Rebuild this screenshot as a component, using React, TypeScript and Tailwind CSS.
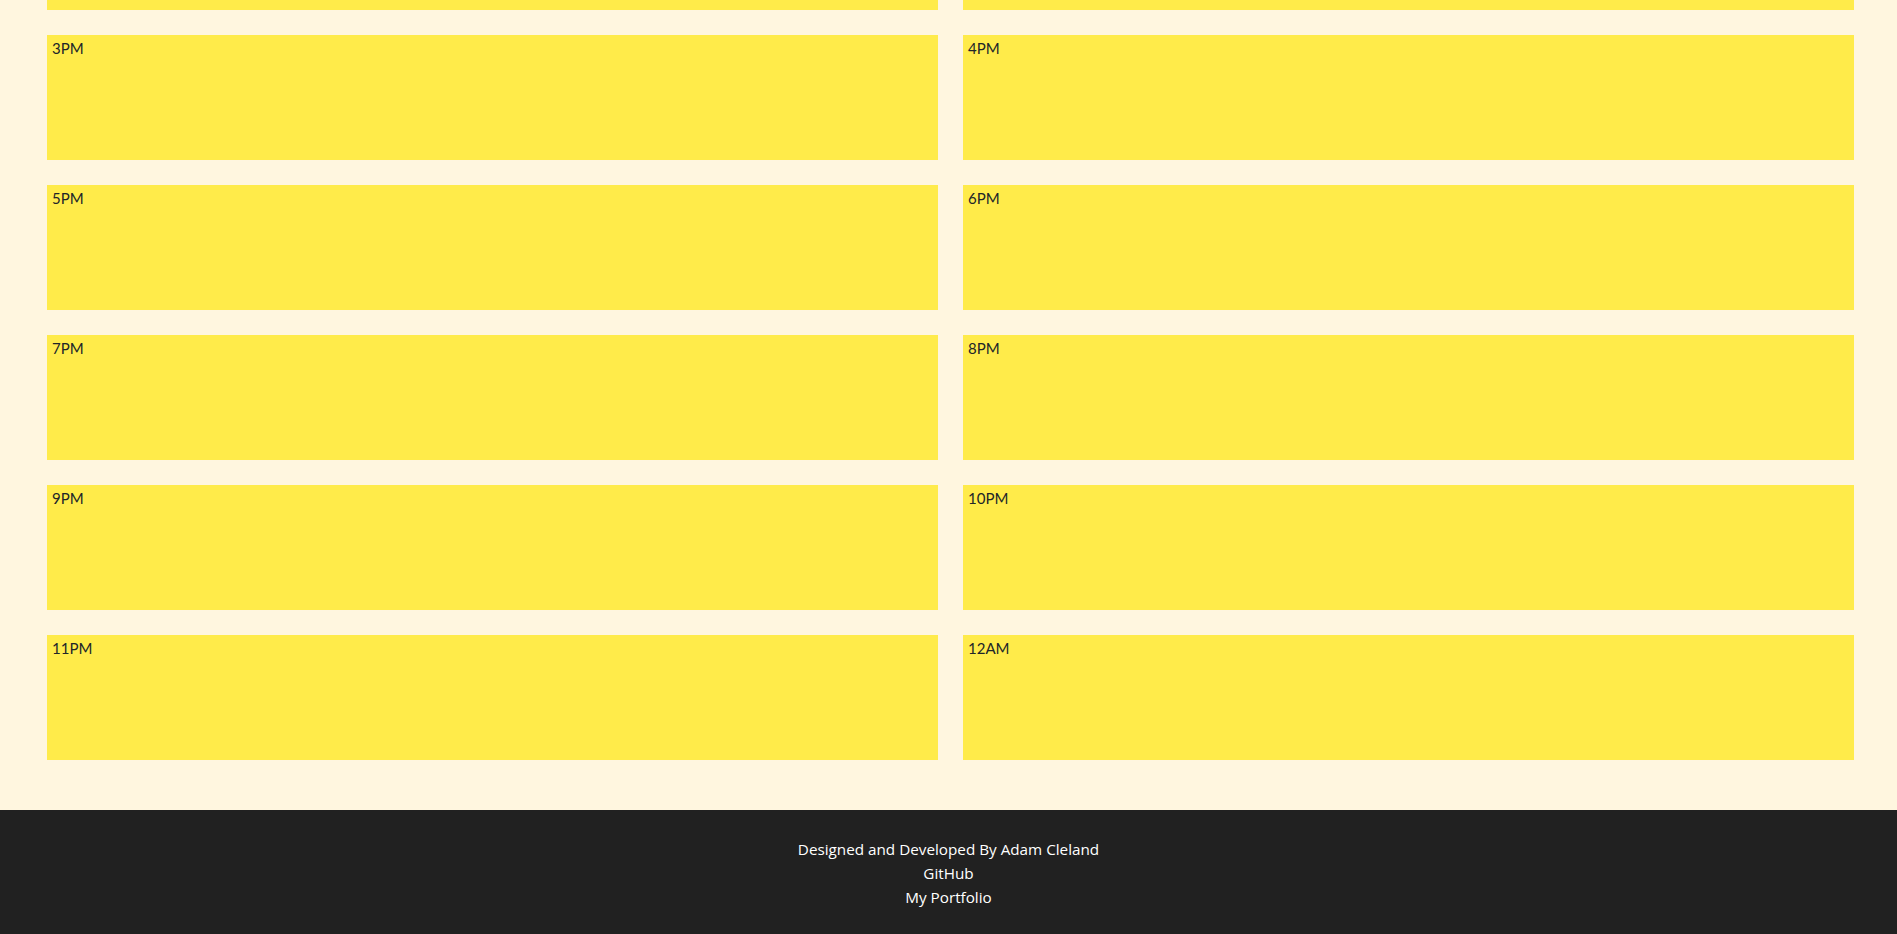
import React from "react";

const rows = [
  ["3PM", "4PM"],
  ["5PM", "6PM"],
  ["7PM", "8PM"],
  ["9PM", "10PM"],
  ["11PM", "12AM"],
];

export default function App() {
  return (
    <div className="min-h-screen bg-[#fff6df] font-['Lato',sans-serif] text-[#212529]">
      {/* tail of the row above, scrolled out of view */}
      <div className="flex gap-[25px] pl-[47px] pr-[43px]">
        <div className="h-[10px] flex-1 bg-[#ffeb4a]" />
        <div className="h-[10px] flex-1 bg-[#ffeb4a]" />
      </div>

      <div className="flex flex-col gap-[25px] pl-[47px] pr-[43px] pt-[25px] pb-[50px]">
        {rows.map((row, i) => (
          <div key={i} className="flex gap-[25px]">
            {row.map((hour) => (
              <div key={hour} className="h-[125px] flex-1 bg-[#ffeb4a] px-[5px] pt-[1px] text-[15px] leading-6">
                {hour}
              </div>
            ))}
          </div>
        ))}
      </div>

      <footer className="h-[124px] bg-[#212121] pt-[27px] text-center font-['Open_Sans',sans-serif] text-[15.25px] leading-6 text-white">
        <p>Designed and Developed By Adam Cleland</p>
        <p>
          <a href="#">GitHub</a>
        </p>
        <p>
          <a href="#">My Portfolio</a>
        </p>
      </footer>
    </div>
  );
}
